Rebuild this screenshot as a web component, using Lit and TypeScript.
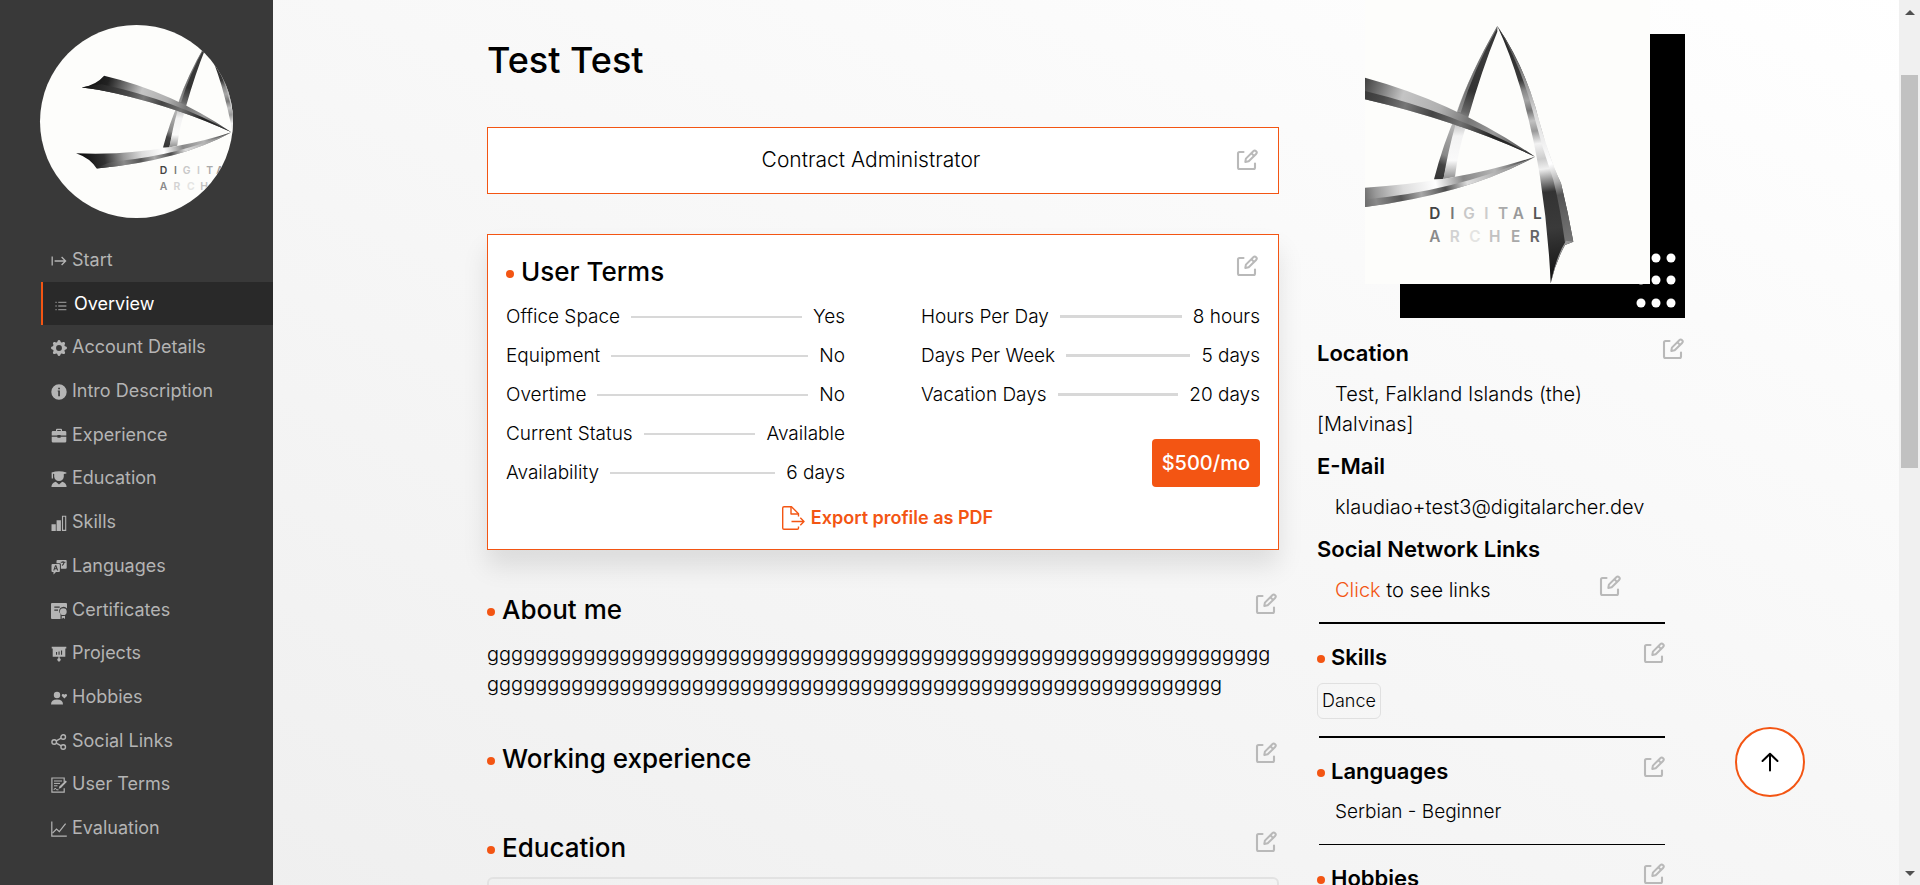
import { LitElement, html, svg, css, nothing, SVGTemplateResult, TemplateResult } from "lit";
import { customElement, property } from "lit/decorators.js";

const ICONS: Record<string, SVGTemplateResult> = {
  start: svg`<path d="M1.2 3.5v9M3.6 8h11M10.6 4l4 4-4 4" fill="none" stroke="currentColor" stroke-width="1.3"/>`,
  list: svg`<path d="M4 3.5h10M4 8h10M4 12.5h10" fill="none" stroke="currentColor" stroke-width="1.6"/><path d="M.5 3.5h1.6M.5 8h1.6M.5 12.5h1.6" fill="none" stroke="currentColor" stroke-width="1.6"/>`,
  gear: svg`<path fill="currentColor" d="M9.405 1.05c-.413-1.4-2.397-1.4-2.81 0l-.1.34a1.464 1.464 0 0 1-2.105.872l-.31-.17c-1.283-.698-2.686.705-1.987 1.987l.169.311c.446.82.023 1.841-.872 2.105l-.34.1c-1.4.413-1.4 2.397 0 2.81l.34.1a1.464 1.464 0 0 1 .872 2.105l-.17.31c-.698 1.283.705 2.686 1.987 1.987l.311-.169a1.464 1.464 0 0 1 2.105.872l.1.34c.413 1.4 2.397 1.4 2.81 0l.1-.34a1.464 1.464 0 0 1 2.105-.872l.31.17c1.283.698 2.686-.705 1.987-1.987l-.169-.311a1.464 1.464 0 0 1 .872-2.105l.34-.1c1.4-.413 1.4-2.397 0-2.81l-.34-.1a1.464 1.464 0 0 1-.872-2.105l.17-.31c.698-1.283-.705-2.686-1.987-1.987l-.311.169a1.464 1.464 0 0 1-2.105-.872l-.1-.34zM8 10.93a2.929 2.929 0 1 1 0-5.86 2.929 2.929 0 0 1 0 5.858z"/>`,
  info: svg`<path fill="currentColor" fill-rule="evenodd" d="M8 .3a7.7 7.7 0 1 0 0 15.4A7.7 7.7 0 0 0 8 .3zM7.2 3.7h1.7v1.6H7.2zM6.7 6.6h2.2v5.6H7.2V7.6h-.5z"/>`,
  briefcase: svg`<path fill="currentColor" fill-rule="evenodd" d="M5 3V1.8Q5 .8 6 .8h4q1 0 1 1V3h3q1.3 0 1.3 1.3v3.2H9.6V7H6.4v.5H.7V4.3Q.7 3 2 3zm1.2 0h3.6V2H6.2zM.7 8.7h5.7v1h3.2v-1h5.7v4.5q0 1.3-1.3 1.3H2q-1.3 0-1.3-1.3z"/>`,
  graduate: svg`<path fill="currentColor" d="M.6 1.4Q8-.8 15.4 1.4v1l-2.6.7v2.6Q12.4 9.8 8 9.9 3.700 9.800 3.200 5.700V3.100L2 2.800v4.800H.7zM.4 16q0-4 4.400-5.200L8 13.600l3.200-2.800Q15.600 12 15.600 16z"/>`,
  bars: svg`<path fill="currentColor" d="M.5 9.200h4.300V16H.5zM5.600 5.200h4.300V16H5.600z"/><path d="M11.500 1.200h3.200v14.200h-3.200z" fill="none" stroke="currentColor" stroke-width="1.100"/>`,
  translate: svg`<path fill="currentColor" fill-rule="evenodd" d="M6.500 1h8.200q1 0 1 1v6.800q0 1-1 1H9.900V5.300q0-1-1-1H5.500V2q0-1 1-1zm3.200 1.800v1h2.700q-.3 1.500-1.600 2.300l.5.900q2-1.200 2.200-3.200h.9v-1h-1.900V2h-1v.8zM1.500 4.900h6.400q1 0 1 1v6q0 1-1 1H5l-2.500 2.600v-2.600h-1q-1 0-1-1v-6q0-1 1-1zm2.600 1.300-1.900 5.200h1.100l.4-1.200h2l.4 1.200h1.100L5.300 6.200zm.6 1.300.6 1.800H4.100z"/>`,
  certificate: svg`<path fill="currentColor" fill-rule="evenodd" d="M1 0h14q1 0 1 1v4.600a4.300 4.300 0 0 0-7.700 3.400q.3 1 1.200 2V16H1q-1 0-1-1V1q0-1 1-1zm2.300 3.600v1.100h5.400V3.600zm0 3v1.100h3.700V6.600z"/><path fill="currentColor" d="M12.300 5.300a3.400 3.400 0 1 1 0 6.800 3.400 3.400 0 0 1 0-6.800zM10.700 12.800q1.600.6 3.300 0V16l-1.700-1.200-1.600 1.200z"/>`,
  board: svg`<path fill="currentColor" fill-rule="evenodd" d="M.7.800h14.600v1.700h-1v8.300H8.600v1.500a1.600 1.600 0 1 1-1.200 0v-1.500H1.700V2.500h-1zM5 6v2.800h1.100V6zm2.500-.6v3.400h1.100V5.400zm2.500-.8v4.200h1.100V4.600z"/>`,
  hobby: svg`<path fill="currentColor" d="M6 1.800a3.200 3.200 0 1 1 0 6.400 3.200 3.200 0 0 1 0-6.400zM0 14.500q0-5 6-5t6 5zM13.400 8.600 10.900 6Q10.400 4 12 3.900q1 0 1.400.9.400-.9 1.400-.9 1.600.1 1.100 2.100z"/>`,
  share: svg`<g fill="none" stroke="currentColor" stroke-width="1.400"><circle cx="3.200" cy="8" r="2.300"/><circle cx="12.200" cy="3" r="2.300"/><circle cx="12.200" cy="13" r="2.300"/><path d="m5.300 6.900 4.900-2.700M5.300 9.100l4.900 2.700"/></g>`,
  terms: svg`<path d="M13.200 5V1H.9v14.200h12.300v-4" fill="none" stroke="currentColor" stroke-width="1.200"/><path d="M3 4h8M3 6.400h6M3 8.800h3.500M2.800 13l1.500-2 1.200 1.800h2" fill="none" stroke="currentColor" stroke-width="1"/><path fill="currentColor" d="m14.600 3.400 1.300 1.400-6 6.200-2.200.8.700-2.200z"/>`,
  chart: svg`<path d="M.8.500v14.700h15" fill="none" stroke="currentColor" stroke-width="1.200"/><path d="m1.500 12.200 4-4.200 2.800 2.600L14.600 2.600" fill="none" stroke="currentColor" stroke-width="1.200"/>`,
};

const NAV: [string, string][] = [
  ["start", "Start"],
  ["list", "Overview"],
  ["gear", "Account Details"],
  ["info", "Intro Description"],
  ["briefcase", "Experience"],
  ["graduate", "Education"],
  ["bars", "Skills"],
  ["translate", "Languages"],
  ["certificate", "Certificates"],
  ["board", "Projects"],
  ["hobby", "Hobbies"],
  ["share", "Social Links"],
  ["terms", "User Terms"],
  ["chart", "Evaluation"],
];

const WORK_TERMS: [string, string][] = [
  ["Office Space", "Yes"],
  ["Equipment", "No"],
  ["Overtime", "No"],
  ["Current Status", "Available"],
  ["Availability", "6 days"],
];

const TIME_TERMS: [string, string][] = [
  ["Hours Per Day", "8 hours"],
  ["Days Per Week", "5 days"],
  ["Vacation Days", "20 days"],
];

@customElement("archer-logo")
class ArcherLogo extends LitElement {
  @property() view = "195 0 855 852";

  static styles = css`
    :host {
      display: block;
      background: #fdfdfb;
      overflow: hidden;
    }
    .art {
      display: block;
      width: 100%;
      height: 100%;
    }
    .word {
      font: 600 46px "Inter", sans-serif;
    }
  `;

  render() {
    return html`
      <svg class="art" viewBox=${this.view} preserveAspectRatio="xMidYMid slice" role="img" aria-label="Digital Archer">
        <defs>
          <linearGradient id="up" gradientUnits="userSpaceOnUse" x1="42" y1="240" x2="705" y2="470">
            <stop offset="0" stop-color="#0c0c0c"/><stop offset=".16" stop-color="#222"/>
            <stop offset=".28" stop-color="#777"/><stop offset=".38" stop-color="#c4c4c4"/>
            <stop offset=".55" stop-color="#b0b0b0"/><stop offset=".68" stop-color="#777"/>
            <stop offset=".8" stop-color="#999"/><stop offset="1" stop-color="#333"/>
          </linearGradient>
          <linearGradient id="upd" gradientUnits="userSpaceOnUse" x1="42" y1="260" x2="705" y2="470">
            <stop offset="0" stop-color="#111"/><stop offset=".3" stop-color="#4a4a4a"/>
            <stop offset=".4" stop-color="#777"/><stop offset=".52" stop-color="#444"/>
            <stop offset=".65" stop-color="#707070"/><stop offset=".8" stop-color="#222"/>
            <stop offset="1" stop-color="#333"/>
          </linearGradient>
          <linearGradient id="lo" gradientUnits="userSpaceOnUse" x1="17" y1="600" x2="705" y2="470">
            <stop offset="0" stop-color="#050505"/><stop offset=".18" stop-color="#333"/>
            <stop offset=".3" stop-color="#999"/><stop offset=".42" stop-color="#ddd"/>
            <stop offset=".56" stop-color="#fff"/><stop offset=".68" stop-color="#888"/>
            <stop offset=".82" stop-color="#b5b5b5"/><stop offset="1" stop-color="#222"/>
          </linearGradient>
          <linearGradient id="lod" gradientUnits="userSpaceOnUse" x1="108" y1="631" x2="705" y2="470">
            <stop offset="0" stop-color="#222"/><stop offset=".2" stop-color="#8a8a8a"/>
            <stop offset=".32" stop-color="#555"/><stop offset=".42" stop-color="#a8a8a8"/>
            <stop offset=".54" stop-color="#4d4d4d"/><stop offset=".65" stop-color="#ddd"/>
            <stop offset="1" stop-color="#777"/>
          </linearGradient>
          <linearGradient id="leg" gradientUnits="userSpaceOnUse" x1="592" y1="78" x2="402" y2="538">
            <stop offset="0" stop-color="#333"/><stop offset=".2" stop-color="#3a3a3a"/>
            <stop offset=".42" stop-color="#333"/><stop offset=".55" stop-color="#666"/>
            <stop offset=".66" stop-color="#b5b5b5"/><stop offset=".84" stop-color="#888"/>
            <stop offset=".9" stop-color="#444"/><stop offset="1" stop-color="#333"/>
          </linearGradient>
          <linearGradient id="legl" x1="0" y1="0" x2="0" y2="1">
            <stop offset="0" stop-color="#ccc"/><stop offset=".2" stop-color="#f3f3f3"/>
            <stop offset=".65" stop-color="#fafafa"/><stop offset="1" stop-color="#8c8c8c"/>
          </linearGradient>
          <linearGradient id="rt" gradientUnits="userSpaceOnUse" x1="592" y1="78" x2="700" y2="850">
            <stop offset="0" stop-color="#222"/><stop offset=".22" stop-color="#3a3a3a"/>
            <stop offset=".26" stop-color="#888"/><stop offset=".3" stop-color="#a5a5a5"/>
            <stop offset=".34" stop-color="#777"/><stop offset=".38" stop-color="#c2c2c2"/>
            <stop offset=".42" stop-color="#999"/><stop offset=".47" stop-color="#f2f2f2"/>
            <stop offset=".53" stop-color="#ccc"/><stop offset=".57" stop-color="#f0f0f0"/>
            <stop offset=".61" stop-color="#999"/><stop offset=".66" stop-color="#333"/>
            <stop offset=".8" stop-color="#3a3a3a"/><stop offset="1" stop-color="#111"/>
          </linearGradient>
          <linearGradient id="rtl" gradientUnits="userSpaceOnUse" x1="592" y1="78" x2="790" y2="740">
            <stop offset="0" stop-color="#444"/><stop offset=".15" stop-color="#666"/>
            <stop offset=".3" stop-color="#a5a5a5"/>
            <stop offset=".42" stop-color="#ddd"/><stop offset=".64" stop-color="#fff"/>
            <stop offset=".72" stop-color="#b0b0b0"/><stop offset=".78" stop-color="#555"/>
            <stop offset="1" stop-color="#777"/>
          </linearGradient>
        </defs>
        <path fill="url(#leg)" d="M592 78Q508 225 470 340 430 430 402 538L430 538Q448 450 480 385L504 355Q545 210 592 95z"/>
        <path fill="#b3b3b3" opacity=".5" d="M592 78Q508 225 470 335L482 338Q520 210 590 88z"/>
        <path fill="url(#legl)" d="M430 538 465 530Q475 450 496 385L466 376Q445 450 430 538z"/>
        <path fill="url(#lo)" d="M17 563Q100 567 195 563 480 545 705 470 480 595 108 631 80 585 17 563z"/>
        <path fill="url(#lod)" d="M108 631Q480 595 705 470 470 572 205 597 150 602 108 631z"/>
        <path fill="url(#up)" d="M42 272Q105 262 141 220 440 290 705 470 480 365 195 298 110 280 42 272z"/>
        <path fill="url(#upd)" d="M42 272Q90 262 130 258 460 330 705 470 480 365 195 298 110 280 42 272z"/>
        <path fill="url(#rt)" d="M592 78Q665 185 706 320 745 470 783 550 805 640 820 725L795 735Q765 790 752 850 745 690 720 530 700 400 660 260 630 160 592 78z"/>
        <path fill="url(#rtl)" d="M592 78Q665 185 706 320 745 470 783 550 805 640 820 725L795 728Q780 620 760 540 725 440 700 340 665 200 592 78z"/>
        <path fill="#999" d="M820 725 795 735Q765 790 752 850 770 765 798 722z"/>
        <text class="word" y="656" x="388 451 490 553 594 638 699" fill="#bdbdbd"><tspan fill="#444">D</tspan><tspan fill="#777">I</tspan><tspan fill="#c8c8c8">G</tspan><tspan fill="#ccc">I</tspan><tspan fill="#aaa">T</tspan><tspan fill="#999">A</tspan><tspan fill="#555">L</tspan></text>
        <text class="word" y="725" x="388 449 508 567 633 689" fill="#bdbdbd"><tspan fill="#8a8a8a">A</tspan><tspan fill="#d2d2d2">R</tspan><tspan fill="#e4e4e2">C</tspan><tspan fill="#c2c2c2">H</tspan><tspan fill="#a8a8a8">E</tspan><tspan fill="#666">R</tspan></text>
      </svg>
    `;
  }
}

@customElement("edit-button")
class EditButton extends LitElement {
  @property() label = "Edit";

  static styles = css`
    :host {
      display: block;
      flex: none;
    }
    .edit {
      display: block;
      padding: 0;
      border: 0;
      background: none;
      color: #b9b9b9;
      cursor: pointer;
    }
    .glyph {
      display: block;
      width: 22px;
      height: 22px;
    }
  `;

  render() {
    return html`
      <button class="edit" type="button" aria-label=${this.label}>
        <svg class="glyph" viewBox="0 0 22 22" fill="none" stroke="currentColor" stroke-linecap="round" stroke-linejoin="round">
          <path stroke-width="2.100" d="M7.500 3H3.500Q2 3 2 4.500V18.500Q2 20 3.500 20H17.500Q19 20 19 18.500V14.500"/>
          <path stroke-width="2" d="M9.300 12.900 9.900 9.600 17.300 2.200a1.900 1.900 0 0 1 2.800 2.800L12.700 12.300zM15.400 4.300l2.600 2.600"/>
        </svg>
      </button>
    `;
  }
}

@customElement("app-root")
class AppRoot extends LitElement {
  static styles = css`
    :host {
      --accent: #f35513;
      display: flex;
      height: 100vh;
      overflow: hidden;
      font-family: "Inter", sans-serif;
      font-size: 20px;
      font-weight: 300;
      line-height: 30px;
      color: #000;
      background: linear-gradient(to top right, #eeeeee, #fff);
    }
    * {
      box-sizing: border-box;
    }
    h1, h2, h3, p, dl, dd, dt, figure {
      margin: 0;
    }

    .sidebar {
      display: flex;
      flex-direction: column;
      flex: none;
      width: 273px;
      padding: 25px 0 35px;
      background: #393939;
    }
    .avatar {
      width: 193px;
      height: 193px;
      margin: 0 40px 20px;
      border-radius: 50%;
      flex: none;
    }
    .menu {
      flex: 1;
      display: grid;
      grid-auto-rows: 1fr;
      margin-left: 41px;
    }
    .link {
      display: flex;
      align-items: center;
      gap: 5px;
      padding-left: 10px;
      font-size: 18px;
      font-weight: 400;
      line-height: 22px;
      color: #b4b4b4;
      text-decoration: none;
    }
    .link.active {
      color: #fff;
      background: #292929;
      border-left: 2px solid var(--accent);
    }
    .link-icon {
      width: 16px;
      height: 16px;
      margin-top: 2px;
      flex: none;
    }
    .active .link-icon {
      padding: 2px 1px 0 2px;
      color: #8a8a8a;
    }

    .page {
      flex: 1;
      min-width: 0;
      overflow: hidden;
    }
    .content {
      display: grid;
      grid-template-columns: minmax(0, 1fr) 368px;
      gap: 38px;
      align-items: start;
      max-width: 1198px;
      margin: 0 auto;
    }
    .profile {
      padding-top: 38px;
    }
    .name {
      font-size: 36px;
      font-weight: 500;
      line-height: 44px;
    }
    .role {
      display: grid;
      grid-template-columns: 1fr 22px;
      align-items: center;
      height: 67px;
      margin: 45px 0 40px;
      padding: 0 20px 2px 18px;
      font-size: 21px;
      text-align: center;
      background: #fff;
      border: 1px solid var(--accent);
    }
    .card {
      padding: 17px 18px 18px;
      background: #fff;
      border: 1px solid var(--accent);
      box-shadow: 0 16px 24px rgba(0, 0, 0, 0.1);
    }
    .head {
      display: flex;
      justify-content: space-between;
      align-items: flex-start;
    }
    .head.large {
      padding-right: 2px;
    }
    .large edit-button {
      padding-top: 3px;
    }
    .title {
      display: flex;
      align-items: center;
      gap: 7px;
      font-size: 26px;
      font-weight: 500;
      line-height: 40px;
    }
    .title::before {
      content: "";
      width: 8px;
      height: 8px;
      margin-top: 4px;
      border-radius: 50%;
      background: var(--accent);
    }
    .terms {
      display: grid;
      grid-template-columns: 1fr 1fr;
      gap: 76px;
      margin-top: 5px;
      font-size: 19px;
    }
    .term {
      display: flex;
      align-items: center;
      gap: 11px;
      line-height: 39px;
    }
    .rule {
      flex: 1;
      height: 2px;
      background: #d8d8d8;
    }
    .rate-side .rule {
      height: 3px;
    }
    .rate {
      display: block;
      width: fit-content;
      margin: 25px 0 0 auto;
      padding: 0 10px;
      border-radius: 4px;
      font-size: 20px;
      font-weight: 500;
      line-height: 48px;
      color: #fff;
      background: var(--accent);
    }
    .export {
      display: flex;
      align-items: center;
      gap: 6px;
      height: 26px;
      margin: 13px auto 0;
      padding: 0 0 0 8px;
      border: 0;
      background: none;
      font: 600 18px/22px "Inter", sans-serif;
      color: var(--accent);
      cursor: pointer;
    }
    .export-icon {
      width: 24px;
      height: 26px;
    }
    .section {
      display: flex;
      flex-direction: column;
      padding-top: 40px;
    }
    .section > .head {
      margin-bottom: 9px;
    }
    .about {
      overflow-wrap: anywhere;
    }
    .entry {
      height: 120px;
      border: 2px solid #e2e2e2;
      border-radius: 6px;
    }

    .photo {
      display: grid;
      width: 320px;
      height: 318px;
      margin-left: auto;
    }
    .photo > * {
      grid-area: 1 / 1;
      width: 285px;
      height: 284px;
    }
    .backdrop {
      place-self: end;
      background: #000;
    }
    .portrait {
      z-index: 1;
    }
    .facts {
      padding: 20px 1px 0 0;
    }
    .subtitle {
      font-size: 22px;
      font-weight: 600;
      line-height: 30px;
      margin-bottom: 11px;
    }
    .fact {
      margin-bottom: 12px;
      padding-right: 20px;
      text-indent: 18px;
    }
    .social {
      display: flex;
      justify-content: space-between;
      padding-right: 63px;
    }
    .accent {
      color: var(--accent);
      text-decoration: none;
    }
    .block {
      margin-right: 20px;
      padding-top: 17px;
    }
    .block::before {
      content: "";
      display: block;
      height: 2px;
      margin: 0 0 18px 2px;
      background: #000;
    }
    .block.thin::before {
      height: 1px;
    }
    .block .subtitle {
      display: flex;
      align-items: center;
      gap: 6px;
    }
    .block .subtitle::before {
      content: "";
      width: 8px;
      height: 8px;
      margin-top: 4px;
      border-radius: 50%;
      background: var(--accent);
    }
    .tag {
      display: block;
      width: fit-content;
      padding: 0 4px;
      border: 1px solid #e0e0e0;
      border-radius: 6px;
      font-size: 18px;
      line-height: 34px;
    }
    .links {
      text-indent: 18px;
    }
    .lang {
      font-size: 19px;
      text-indent: 18px;
    }

    .to-top {
      position: fixed;
      right: 115px;
      bottom: 88px;
      display: grid;
      place-items: center;
      width: 70px;
      height: 70px;
      padding: 0;
      border: 2px solid var(--accent);
      border-radius: 50%;
      background: #fff;
      cursor: pointer;
    }
    .to-top-icon {
      width: 20px;
      height: 22px;
    }
    .scroller {
      display: flex;
      flex-direction: column;
      align-items: center;
      flex: none;
      width: 21px;
      padding: 10px 0 9px;
      background: #f0f0f0;
    }
    .arrow {
      border: 5px solid transparent;
      border-top-width: 0;
      border-bottom-color: #505050;
    }
    .arrow.down {
      border-width: 5px 5px 0;
      border-top-color: #505050;
      margin-top: auto;
    }
    .thumb {
      width: 17px;
      height: 393px;
      margin-top: 60px;
      background: #c1c1c1;
    }
  `;

  private term = ([name, value]: [string, string]) => html`
    <div class="term"><dt>${name}</dt><span class="rule"></span><dd>${value}</dd></div>
  `;

  private section(title: string, body: TemplateResult | typeof nothing = nothing) {
    return html`
      <section class="section">
        <div class="head large">
          <h2 class="title">${title}</h2>
          <edit-button label="Edit ${title}"></edit-button>
        </div>
        ${body}
      </section>
    `;
  }

  private block(title: string, body: TemplateResult | typeof nothing = nothing, thin = false) {
    return html`
      <section class="block ${thin ? "thin" : ""}">
        <div class="head">
          <h3 class="subtitle">${title}</h3>
          <edit-button label="Edit ${title}"></edit-button>
        </div>
        ${body}
      </section>
    `;
  }

  render() {
    return html`
      <aside class="sidebar">
        <archer-logo class="avatar" view="-143 -5 855 855"></archer-logo>
        <nav class="menu">
          ${NAV.map(([icon, label]) => html`
            <a class="link ${label === "Overview" ? "active" : ""}" href="#">
              <svg class="link-icon" viewBox="0 0 16 16" aria-hidden="true">${ICONS[icon]}</svg>
              <span>${label}</span>
            </a>
          `)}
        </nav>
      </aside>

      <main class="page">
        <div class="content">
          <div class="profile">
            <h1 class="name">Test Test</h1>
            <div class="role">
              <span>Contract Administrator</span>
              <edit-button label="Edit role"></edit-button>
            </div>
            <section class="card">
              <div class="head large">
                <h2 class="title">User Terms</h2>
                <edit-button label="Edit user terms"></edit-button>
              </div>
              <div class="terms">
                <dl>${WORK_TERMS.map(this.term)}</dl>
                <div class="rate-side">
                  <dl>${TIME_TERMS.map(this.term)}</dl>
                  <span class="rate">$500/mo</span>
                </div>
              </div>
              <button class="export" type="button">
                <svg class="export-icon" viewBox="0 0 24 26" fill="none" stroke="currentColor" stroke-width="1.400" stroke-linejoin="round" aria-hidden="true">
                  <path d="M17.500 11.500V8.800L10.500 1.700H3Q1.700 1.700 1.700 3V23Q1.700 24.300 3 24.300H16.200Q17.500 24.300 17.500 23V21.500"/>
                  <path d="M10 1.700V9H17.500M10.500 16.500H23M19.300 12.800 23 16.500 19.300 20.200"/>
                </svg>
                Export profile as PDF
              </button>
            </section>
            ${this.section("About me", html`<p class="about">${"g".repeat(126)}</p>`)}
            ${this.section("Working experience")}
            ${this.section("Education", html`<div class="entry"></div>`)}
          </div>

          <div class="details">
            <figure class="photo">
              <archer-logo class="portrait"></archer-logo>
              <svg class="backdrop" viewBox="0 0 285 284" fill="#fff" aria-hidden="true">
                ${[224, 246, 269].map((y) => [241, 256, 271].map((x) => svg`<circle cx=${x} cy=${y} r="4.500"/>`))}
              </svg>
            </figure>
            <div class="facts">
              <div class="head">
                <h3 class="subtitle">Location</h3>
                <edit-button label="Edit location"></edit-button>
              </div>
              <p class="fact">Test, Falkland Islands (the) [Malvinas]</p>
              <h3 class="subtitle">E-Mail</h3>
              <p class="fact">klaudiao+test3@digitalarcher.dev</p>
              <h3 class="subtitle">Social Network Links</h3>
              <div class="social">
                <p class="links"><a class="accent" href="#">Click</a> to see links</p>
                <edit-button label="Edit social links"></edit-button>
              </div>
            </div>
            ${this.block("Skills", html`<span class="tag">Dance</span>`)}
            ${this.block("Languages", html`<p class="lang">Serbian - Beginner</p>`)}
            ${this.block("Hobbies", nothing, true)}
          </div>
        </div>
      </main>

      <div class="scroller" aria-hidden="true">
        <span class="arrow"></span>
        <span class="thumb"></span>
        <span class="arrow down"></span>
      </div>

      <button class="to-top" type="button" aria-label="Back to top">
        <svg class="to-top-icon" viewBox="0 0 20 22" fill="none" stroke="#000" stroke-width="2" stroke-linecap="round" stroke-linejoin="round">
          <path d="M10 19.500V3M2.500 10 10 2.800 17.500 10"/>
        </svg>
      </button>
    `;
  }
}
